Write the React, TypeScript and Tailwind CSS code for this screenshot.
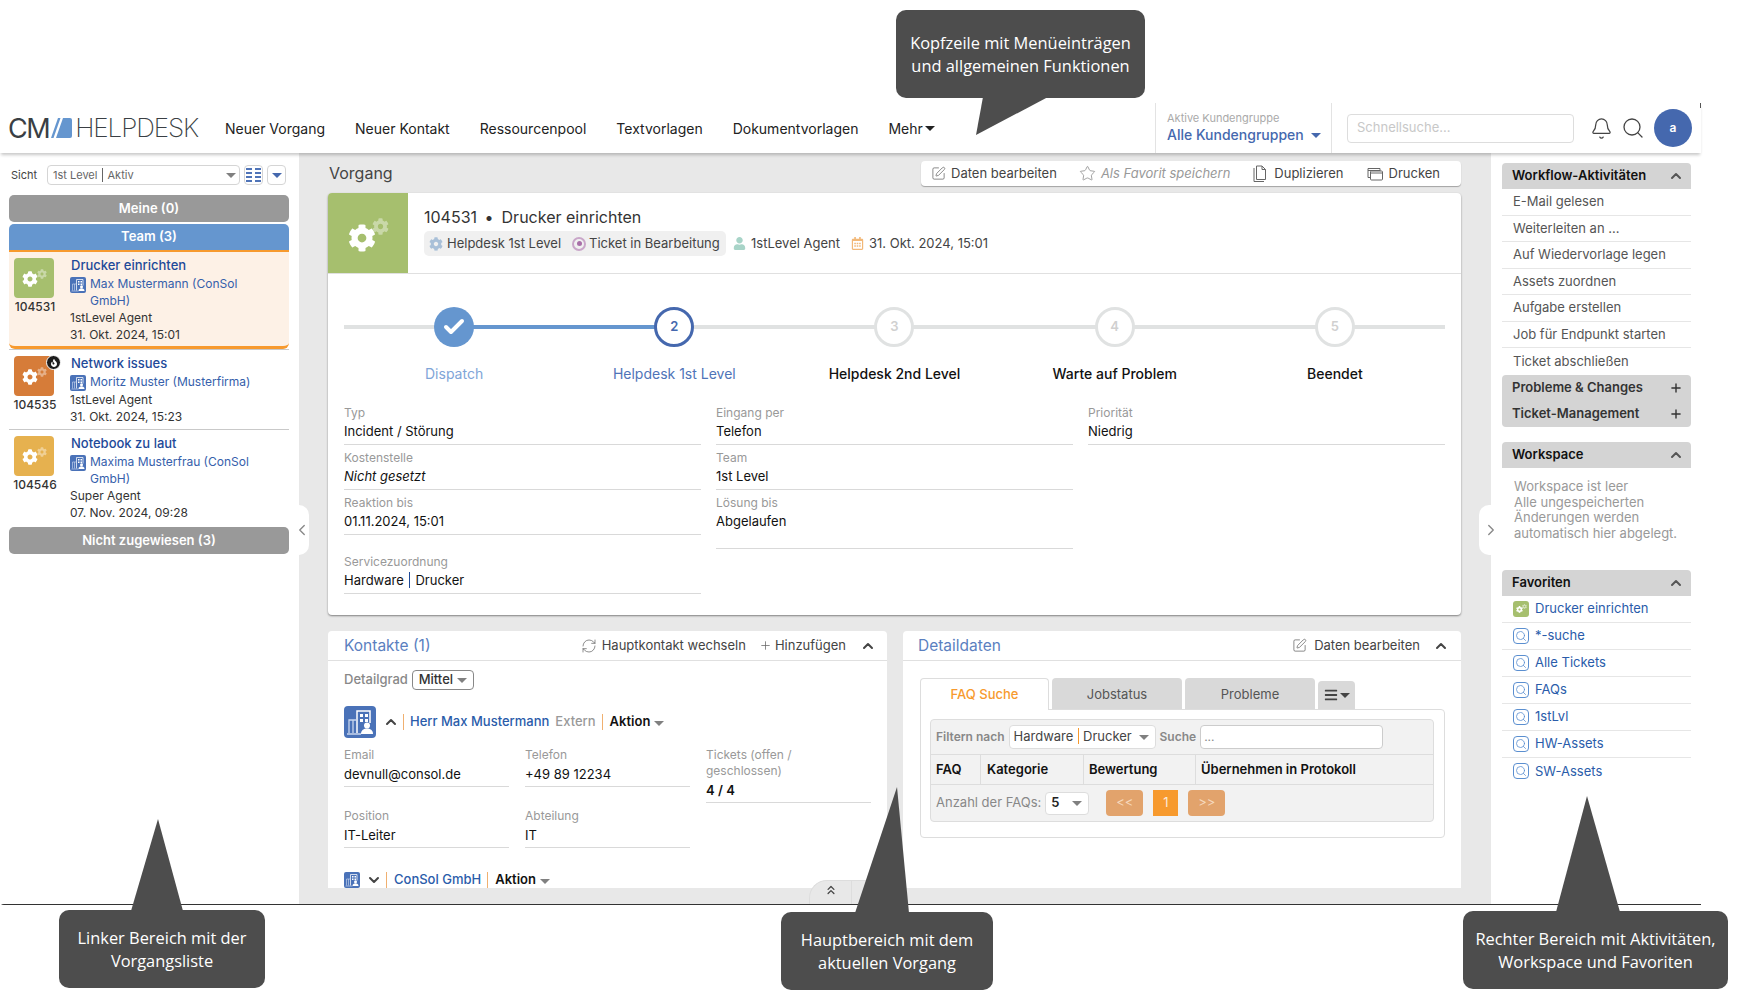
import React from "react";
import {
  Bell,
  ChevronLeft,
  ChevronRight,
  ChevronUp,
  ChevronDown,
  ChevronsUp,
  Plus,
  Search,
  SquarePen,
  Star,
  Check,
  RefreshCw,
} from "lucide-react";
import { FaCog, FaUser, FaRegCalendarAlt, FaBars, FaFire } from "react-icons/fa";

function Caret({ className = "border-t-[#808080]" }: { className?: string }) {
  return (
    <span
      className={`inline-block h-0 w-0 border-x-[5px] border-t-[5px] border-x-transparent ${className}`}
    />
  );
}

function StatusIcon({ bg }: { bg: string }) {
  return (
    <div className={`relative h-10 w-10 rounded-[4px] ${bg}`}>
      <FaCog className="absolute left-[8px] top-[13px] text-[16px] text-white" />
      <FaCog className="absolute left-[23px] top-[11px] text-[10px] text-white opacity-40" />
    </div>
  );
}

function BuildingIcon({ className = "h-4 w-4" }: { className?: string }) {
  return (
    <svg viewBox="0 0 32 32" className={className}>
      <rect width="32" height="32" rx="4" fill="#4a72b8" />
      <path d="M5 27V14h7" stroke="#c8d6ee" strokeWidth="1.3" fill="none" />
      <path d="M9 14v13" stroke="#c8d6ee" strokeWidth="1.3" fill="none" />
      <path d="M13 27V5h13v12" stroke="#fff" strokeWidth="1.5" fill="none" />
      <path d="M16 8h3v3h-3zM21 8h3v3h-3zM16 13h3v3h-3zM21 13h3v3h-3z" fill="#fff" />
      <circle cx="23" cy="19.5" r="3" fill="#fff" />
      <path d="M17 28c0-4 3-5.5 6-5.5s6 1.500 6 5.500z" fill="#fff" />
      <path d="M3 28h14" stroke="#c8d6ee" strokeWidth="1.3" />
    </svg>
  );
}

function WindowsIcon() {
  return (
    <svg viewBox="0 0 16 14" className="h-[14px] w-[16px]" fill="none" stroke="#666" strokeWidth="1">
      <path d="M3.5 10.5H1V1.500h12v2.500" />
      <path d="M1 3.500h12" />
      <rect x="3.500" y="4" width="12" height="9" rx="1" />
      <path d="M3.500 6h12" />
    </svg>
  );
}

function FilesIcon() {
  return (
    <svg viewBox="0 0 14 18" className="h-[18px] w-[14px]" fill="none" stroke="#666" strokeWidth="1">
      <path d="M1 3v13.500h10" />
      <path d="M3.500 1h5.500l3.500 3.500V14.500h-9z" />
      <path d="M9 1v3.500h3.500" />
    </svg>
  );
}

function FavSearch() {
  return (
    <span className="flex h-[16px] w-[16px] items-center justify-center rounded-[4px] border border-[#5b8fd0]">
      <Search size={12} strokeWidth={1.6} className="text-[#5b8fd0]" />
    </span>
  );
}

type Ticket = {
  id: string;
  title: string;
  contact: string;
  agent: string;
  date: string;
  bg: string;
  badge?: boolean;
  box: string;
};

function TicketRow({ t }: { t: Ticket }) {
  return (
    <div className={`flex pt-[5px] ${t.box}`}>
      <div className="flex w-[61px] shrink-0 flex-col pl-[5px] pt-[1px]">
        <div className="relative w-10">
          <StatusIcon bg={t.bg} />
          {t.badge && (
            <span className="absolute -right-[7px] -top-[1px] flex h-[15px] w-[15px] items-center justify-center rounded-full border border-white bg-[#1c1c1c]">
              <FaFire className="text-[8px] text-white" />
            </span>
          )}
        </div>
        <span className="-ml-[1px] w-[44px] text-center text-[12px] font-medium leading-[18px] text-[#333]">
          {t.id}
        </span>
      </div>
      <div className="min-w-0 flex-1 pr-4 text-[12px] leading-[17px] text-[#333]">
        <div className="pl-[1px] text-[13px] font-medium leading-[16px] text-[#1e4a99]">{t.title}</div>
        <div className="mt-[2px] flex gap-[4px]">
          <BuildingIcon className="mt-[2px] h-[16px] w-[16px] shrink-0" />
          <span className="text-[#3660ab]">{t.contact}</span>
        </div>
        <div className="leading-[18px]">{t.agent}</div>
        <div className="leading-[16px]">{t.date}</div>
      </div>
    </div>
  );
}

function Field({
  label,
  value,
  className = "h-10",
}: {
  label: string;
  value: React.ReactNode;
  className?: string;
}) {
  return (
    <div className={`mb-[5px] border-b border-[#d9d9d9] ${className}`}>
      <div className="text-[12px] leading-[16px] text-[#999]">{label}</div>
      <div className="text-[13px] leading-[20px] text-[#111]">{value}</div>
    </div>
  );
}

function PanelHead({
  title,
  plus,
  rounded = "rounded-t-[4px]",
  strong = true,
}: {
  title: string;
  plus?: boolean;
  rounded?: string;
  strong?: boolean;
}) {
  return (
    <div className={`flex h-[26px] items-center justify-between bg-[#d4d4d4] pl-[10px] pr-[7px] ${rounded}`}>
      <span className={`text-[13px] font-semibold ${strong ? "text-[#111]" : "text-[#333]"}`}>{title}</span>
      {plus ? (
        <Plus size={14} strokeWidth={2.4} className="mr-[1px] text-[#333]" />
      ) : (
        <ChevronUp size={16} strokeWidth={3} className="text-[#555]" />
      )}
    </div>
  );
}

function Step({
  n,
  label,
  state,
}: {
  n: number;
  label: string;
  state: "done" | "current" | "todo";
}) {
  return (
    <div className="relative z-10 flex flex-col items-center">
      {state === "done" && (
        <span className="flex h-10 w-10 items-center justify-center rounded-full bg-[#6596cf]">
          <Check size={24} strokeWidth={4} className="text-white" />
        </span>
      )}
      {state === "current" && (
        <span className="flex h-10 w-10 items-center justify-center rounded-full border-[3.5px] border-[#4568ae] bg-white text-[13px] font-semibold text-[#4568ae]">
          {n}
        </span>
      )}
      {state === "todo" && (
        <span className="flex h-10 w-10 items-center justify-center rounded-full border-[3.5px] border-[#e0e2e2] bg-white text-[13px] font-semibold text-[#d0d0d0]">
          {n}
        </span>
      )}
      <span
        className={`mt-[19px] text-[14px] leading-[16px] ${
          state === "done"
            ? "text-[#7fa5d8]"
            : state === "current"
              ? "text-[#4f74b8]"
              : "font-medium text-[#111]"
        }`}
      >
        {label}
      </span>
    </div>
  );
}

function Callout({ box, lines }: { box: string; lines: string[] }) {
  return (
    <div
      className={`absolute z-30 flex flex-col items-center justify-center rounded-[10px] bg-[#4d4d4d] font-['Open_Sans',sans-serif] text-[16.4px] leading-[23px] text-white ${box}`}
    >
      {lines.map((l) => (
        <span key={l}>{l}</span>
      ))}
    </div>
  );
}

const tickets: Ticket[] = [
  {
    id: "104531",
    title: "Drucker einrichten",
    contact: "Max Mustermann (ConSol GmbH)",
    agent: "1stLevel Agent",
    date: "31. Okt. 2024, 15:01",
    bg: "bg-[#a6bf6e]",
    box: "h-[97px] rounded-b-[6px] border-b-[3px] border-[#f79a2e] bg-[#fdf1e6]",
  },
  {
    id: "104535",
    title: "Network issues",
    contact: "Moritz Muster (Musterfirma)",
    agent: "1stLevel Agent",
    date: "31. Okt. 2024, 15:23",
    bg: "bg-[#d67c39]",
    badge: true,
    box: "h-[80px] border-b border-[#c9c9c9]",
  },
  {
    id: "104546",
    title: "Notebook zu laut",
    contact: "Maxima Musterfrau (ConSol GmbH)",
    agent: "Super Agent",
    date: "07. Nov. 2024, 09:28",
    bg: "bg-[#e6b14f]",
    box: "h-[97px]",
  },
];

const workflow = [
  "E-Mail gelesen",
  "Weiterleiten an ...",
  "Auf Wiedervorlage legen",
  "Assets zuordnen",
  "Aufgabe erstellen",
  "Job für Endpunkt starten",
  "Ticket abschließen",
];

const favorites = ["*-suche", "Alle Tickets", "FAQs", "1stLvl", "HW-Assets", "SW-Assets"];

export default function App() {
  return (
    <div className="relative h-[1000px] w-[1738px] overflow-hidden bg-white pt-[103px] font-['Inter',sans-serif]">
      <div className="flex h-[802px] w-[1701px] flex-col rounded-bl-[4px] border-b border-[#333]">
        {/* Header */}
        <header className="relative z-20 flex h-[50px] shrink-0 items-center bg-white shadow-[0_3px_3px_-1px_rgba(0,0,0,0.22)]">
          <div className="flex w-[225px] shrink-0 items-center pl-[8px] leading-none text-[#3a3f44]">
            <span className="text-[27px] font-normal tracking-[-1.5px]">CM</span>
            <svg viewBox="0 0 21 20" className="ml-[2px] h-[20px] w-[21px]" fill="#6596cf">
              <path d="M0 20 7 0h2.500l-7 20z" />
              <path d="M5 20 12 0h7a2 2 0 0 1 2 2v16a2 2 0 0 1-2 2z" />
            </svg>
            <span className="ml-[3px] text-[26px] font-extralight tracking-[-1.05px]">HELPDESK</span>
          </div>
          <nav className="flex items-center gap-[30px] text-[14px] text-[#222]">
            <span>Neuer Vorgang</span>
            <span>Neuer Kontakt</span>
            <span>Ressourcenpool</span>
            <span>Textvorlagen</span>
            <span>Dokumentvorlagen</span>
            <span className="flex items-center gap-[2px]">
              Mehr <Caret className="border-t-[#222]" />
            </span>
          </nav>
          <div className="ml-auto flex h-full items-center pr-[9px]">
            <div className="flex h-full w-[177px] flex-col justify-center border-x border-[#e3e3e3] pl-[11px]">
              <span className="text-[11px] leading-[14px] text-[#aaa]">Aktive Kundengruppe</span>
              <span className="flex items-center gap-[7px] text-[14px] font-medium leading-[20px] text-[#4568ae]">
                Alle Kundengruppen <Caret className="border-t-[#4568ae]" />
              </span>
            </div>
            <div className="ml-[15px] flex h-[29px] w-[227px] items-center rounded-[4px] border border-[#ddd] pl-[9px] text-[13px] text-[#c8c8c8]">
              Schnellsuche...
            </div>
            <Bell size={23} strokeWidth={1.3} className="ml-[16px] text-[#444]" />
            <Search size={24} strokeWidth={1.3} className="ml-[8px] text-[#444]" />
            <span className="ml-[9px] flex h-[38px] w-[38px] items-center justify-center rounded-full bg-[#4568ae] text-[12px] font-semibold text-white">
              a
            </span>
          </div>
          <span className="absolute right-0 top-0 h-[5px] w-px bg-[#555]" />
        </header>

        <div className="flex min-h-0 flex-1">
          {/* Left */}
          <aside className="relative w-[299px] shrink-0 bg-white pl-[9px] pr-[10px] pt-[12px]">
            <div className="flex h-5 items-center text-[11px] text-[#444]">
              <span className="ml-[2px] w-[36px]">Sicht</span>
              <div className="flex h-5 w-[193px] items-center justify-between rounded-[4px] border border-[#d5d5d5] pl-[5px] pr-[3px] text-[#666]">
                <span>
                  1st Level <span className="ml-[1px] border-l border-[#666] pl-[5px]">Aktiv</span>
                </span>
                <Caret />
              </div>
              <span className="ml-[4px] flex h-5 w-[19px] items-center justify-center rounded-[4px] border border-[#d5d5d5]">
                <svg viewBox="0 0 15 14" className="h-[14px] w-[15px]" fill="#4f74b8">
                  <path d="M0 0h6v2H0zM9 0h6v2H9zM0 4h6v2H0zM9 4h6v2H9zM0 8h6v2H0zM9 8h6v2H9zM0 12h6v2H0zM9 12h6v2H9z" />
                </svg>
              </span>
              <span className="ml-[4px] flex h-5 w-[19px] items-center justify-center rounded-[4px] border border-[#d5d5d5]">
                <Caret className="border-t-[#4568ae]" />
              </span>
            </div>
            <div className="mt-[10px] flex h-[27px] items-center justify-center rounded-[5px] bg-[#999] text-[13px] font-semibold text-white">
              Meine (0)
            </div>
            <div className="mt-[2px] flex h-[28px] items-center justify-center rounded-t-[5px] border-b-2 border-[#f79a2e] bg-[#6596cf] text-[13px] font-semibold text-white">
              Team (3)
            </div>
            <TicketRow t={tickets[0]} />
            <div className="h-px bg-[#c9c9c9]" />
            <TicketRow t={tickets[1]} />
            <TicketRow t={tickets[2]} />
            <div className="flex h-[27px] items-center justify-center rounded-[5px] bg-[#999] text-[13px] font-semibold text-white">
              Nicht zugewiesen (3)
            </div>
          </aside>

          {/* Main */}
          <main className="relative min-w-0 flex-1 bg-[#e8e8e8] pl-[29px] pr-[30px]">
            <div className="flex h-[33px] items-end justify-between">
              <span className="mb-[1px] pl-[1px] text-[16px] leading-[24px] text-[#444]">Vorgang</span>
              <div className="flex h-[25px] w-[540px] items-center rounded-[4px] bg-white pl-[10px] text-[13px] text-[#444] shadow-[0_1px_1px_rgba(0,0,0,0.3)]">
                <span className="flex items-center gap-[5px]">
                  <SquarePen size={15} strokeWidth={1.2} className="text-[#666]" /> Daten bearbeiten
                </span>
                <span className="ml-[22px] flex items-center gap-[5px] italic text-[#999]">
                  <Star size={17} strokeWidth={1.1} className="text-[#888]" /> Als Favorit speichern
                </span>
                <span className="ml-[23px] flex items-center gap-[7px]">
                  <FilesIcon /> Duplizieren
                </span>
                <span className="ml-[23px] flex items-center gap-[6px]">
                  <WindowsIcon /> Drucken
                </span>
              </div>
            </div>

            {/* Ticket card */}
            <section className="mt-[7px] h-[422px] rounded-[4px] bg-white shadow-[0_1px_2px_rgba(0,0,0,0.45)]">
              <div className="flex h-[81px] border-b border-[#e0e0e0]">
                <div className="relative h-20 w-20 shrink-0 rounded-tl-[4px] bg-[#a6bf6e]">
                  <FaCog className="absolute left-[20px] top-[31px] text-[28px] text-white" />
                  <FaCog className="absolute left-[44px] top-[25px] text-[17px] text-white opacity-40" />
                </div>
                <div className="pl-[16px] pt-[14px]">
                  <div className="text-[16px] leading-[20px] text-[#333]">
                    104531 <span className="mx-[3px]">•</span>
                    <span className="ml-[5px]">Drucker einrichten</span>
                  </div>
                  <div className="mt-[4px] flex items-center text-[13px] text-[#444]">
                    <span className="flex h-[25px] w-[302px] items-center rounded-[5px] bg-[#f0f0f0] pl-[5px]">
                      <FaCog className="mr-[4px] text-[14px] text-[#a9c0d8]" />
                      Helpdesk 1st Level
                      <span className="ml-[11px] mr-[3px] flex h-[14px] w-[14px] items-center justify-center rounded-full border-2 border-[#c9a6c9]">
                        <span className="h-[5px] w-[5px] rounded-full bg-[#a86fa8]" />
                      </span>
                      Ticket in Bearbeitung
                    </span>
                    <FaUser className="ml-[7px] mr-[5px] text-[13px] text-[#a8d4c8]" />
                    1stLevel Agent
                    <FaRegCalendarAlt className="ml-[11px] mr-[5px] text-[13px] text-[#f2b878]" />
                    31. Okt. 2024, 15:01
                  </div>
                </div>
              </div>

              {/* Stepper */}
              <div className="relative mx-[16px] grid grid-cols-5 pt-[33px]">
                <div className="absolute inset-x-0 top-[51px] h-[4px] bg-[#e0e2e2]" />
                <div className="absolute left-[110px] top-[51px] h-[4px] w-[220px] bg-[#6596cf]" />
                <Step n={1} label="Dispatch" state="done" />
                <Step n={2} label="Helpdesk 1st Level" state="current" />
                <Step n={3} label="Helpdesk 2nd Level" state="todo" />
                <Step n={4} label="Warte auf Problem" state="todo" />
                <Step n={5} label="Beendet" state="todo" />
              </div>

              {/* Fields */}
              <div className="mx-[16px] mt-[23px] grid grid-cols-3 gap-x-[15px]">
                <div>
                  <Field label="Typ" value="Incident / Störung" />
                  <Field label="Kostenstelle" value={<span className="italic">Nicht gesetzt</span>} />
                  <Field label="Reaktion bis" value="01.11.2024, 15:01" />
                  <div className="h-[14px]" />
                  <Field
                    label="Servicezuordnung"
                    value={
                      <span>
                        Hardware <span className="ml-[2px] border-l border-[#1e4a99] pl-[5px]">Drucker</span>
                      </span>
                    }
                  />
                </div>
                <div>
                  <Field label="Eingang per" value="Telefon" />
                  <Field label="Team" value="1st Level" />
                  <Field label="Lösung bis" value="Abgelaufen" className="h-[54px]" />
                </div>
                <div>
                  <Field label="Priorität" value="Niedrig" />
                </div>
              </div>
            </section>

            {/* Lower cards */}
            <div className="mt-[16px] grid h-[257px] grid-cols-[559px_558px] gap-x-[16px]">
              <section className="overflow-hidden rounded-t-[4px] bg-white">
                <div className="flex h-[30px] items-center border-b border-[#e0e0e0] pl-[16px] pr-[11px]">
                  <span className="text-[15.5px] text-[#5b7fbf]">Kontakte (1)</span>
                  <span className="ml-auto flex items-center gap-[5px] text-[13px] text-[#444]">
                    <RefreshCw size={16} strokeWidth={1.1} className="text-[#666]" /> Hauptkontakt wechseln
                  </span>
                  <span className="ml-[13px] flex items-center gap-[3px] text-[13px] text-[#444]">
                    <Plus size={13} strokeWidth={1.4} className="text-[#666]" /> Hinzufügen
                  </span>
                  <ChevronUp size={16} strokeWidth={3} className="ml-[14px] text-[#444]" />
                </div>
                <div className="pl-[16px] pr-[16px]">
                  <div className="mt-[9px] flex h-5 items-center text-[13px]">
                    <span className="font-medium text-[#888]">Detailgrad</span>
                    <span className="ml-[4px] flex h-5 w-[62px] items-center justify-center gap-[4px] rounded-[4px] border border-[#888] font-medium text-[#333]">
                      Mittel <Caret />
                    </span>
                  </div>
                  <div className="mt-[16px] flex h-[32px] items-center text-[13px]">
                    <BuildingIcon className="h-[32px] w-[32px]" />
                    <ChevronUp size={16} strokeWidth={3} className="ml-[7px] text-[#444]" />
                    <span className="ml-[4px] h-[16px] border-l border-[#f0b070]" />
                    <span className="ml-[6px] font-medium text-[#2a5caa]">Herr Max Mustermann</span>
                    <span className="ml-[6px] font-medium text-[#999]">Extern</span>
                    <span className="ml-[6px] h-[16px] border-l border-[#f0b070]" />
                    <span className="ml-[7px] font-semibold text-[#111]">Aktion</span>
                    <span className="ml-[4px]">
                      <Caret />
                    </span>
                  </div>
                  <div className="mt-[9px] grid grid-cols-3 gap-x-[16px]">
                    <div className="h-[40px] border-b border-[#d9d9d9]">
                      <div className="text-[12px] leading-[16px] text-[#999]">Email</div>
                      <div className="mt-[1px] text-[13px] leading-[20px] text-[#111]">devnull@consol.de</div>
                    </div>
                    <div className="h-[40px] border-b border-[#d9d9d9]">
                      <div className="text-[12px] leading-[16px] text-[#999]">Telefon</div>
                      <div className="mt-[1px] text-[13px] leading-[20px] text-[#111]">+49 89 12234</div>
                    </div>
                    <div className="h-[56px] border-b border-[#d9d9d9]">
                      <div className="text-[12px] leading-[16px] text-[#999]">
                        Tickets (offen /
                        <br />
                        geschlossen)
                      </div>
                      <div className="mt-[1px] text-[13px] font-semibold leading-[20px] text-[#111]">4 / 4</div>
                    </div>
                    <div className="mt-[5px] h-[40px] border-b border-[#d9d9d9]">
                      <div className="text-[12px] leading-[16px] text-[#999]">Position</div>
                      <div className="mt-[1px] text-[13px] leading-[20px] text-[#111]">IT-Leiter</div>
                    </div>
                    <div className="mt-[5px] h-[40px] border-b border-[#d9d9d9]">
                      <div className="text-[12px] leading-[16px] text-[#999]">Abteilung</div>
                      <div className="mt-[1px] text-[13px] leading-[20px] text-[#111]">IT</div>
                    </div>
                  </div>
                  <div className="mt-[24px] flex h-[16px] items-center text-[13px]">
                    <BuildingIcon className="h-[16px] w-[16px]" />
                    <ChevronDown size={16} strokeWidth={3} className="ml-[6px] text-[#444]" />
                    <span className="ml-[4px] h-[16px] border-l border-[#f0b070]" />
                    <span className="ml-[7px] font-medium text-[#2a5caa]">ConSol GmbH</span>
                    <span className="ml-[6px] h-[16px] border-l border-[#f0b070]" />
                    <span className="ml-[7px] font-semibold text-[#111]">Aktion</span>
                    <span className="ml-[4px]">
                      <Caret />
                    </span>
                  </div>
                </div>
              </section>

              <section className="overflow-hidden rounded-t-[4px] bg-white">
                <div className="flex h-[30px] items-center border-b border-[#e0e0e0] pl-[15px] pr-[12px]">
                  <span className="text-[15.5px] text-[#5b7fbf]">Detaildaten</span>
                  <span className="ml-auto flex items-center gap-[7px] text-[13px] text-[#444]">
                    <SquarePen size={15} strokeWidth={1.2} className="text-[#666]" /> Daten bearbeiten
                  </span>
                  <ChevronUp size={16} strokeWidth={3} className="ml-[13px] text-[#444]" />
                </div>
                <div className="pl-[17px] pr-[16px] pt-[17px]">
                  <div className="relative z-10 flex h-[31px] items-end gap-[3px] text-[13px]">
                    <span className="-mb-px flex h-[32px] w-[129px] items-center justify-center rounded-t-[4px] border border-b-0 border-[#ddd] bg-white pt-[1px] font-medium text-[#f79a2e]">
                      FAQ Suche
                    </span>
                    <span className="flex h-[31px] w-[130px] items-center justify-center rounded-t-[4px] bg-[#d9d9d9] pt-[2px] text-[#555]">
                      Jobstatus
                    </span>
                    <span className="flex h-[31px] w-[130px] items-center justify-center rounded-t-[4px] bg-[#d9d9d9] pt-[2px] text-[#555]">
                      Probleme
                    </span>
                    <span className="flex h-[28px] w-[37px] items-center justify-center gap-[2px] rounded-t-[4px] bg-[#d9d9d9]">
                      <FaBars className="text-[14px] text-[#444]" />
                      <Caret className="border-t-[#444]" />
                    </span>
                  </div>
                  <div className="h-[129px] rounded-b-[4px] rounded-tr-[4px] border border-[#ddd] pb-[10px] pl-[9px] pr-[10px] pt-[9px]">
                    <div className="h-[103px] rounded-[4px] border border-[#ddd] bg-[#f2f2f2] text-[12px]">
                      <div className="flex h-[35px] items-center border-b border-[#ddd] pl-[5px]">
                        <span className="font-semibold text-[#888]">Filtern nach</span>
                        <span className="ml-[4px] flex h-[24px] w-[147px] items-center justify-between rounded-[4px] border border-[#ddd] bg-white pl-[4px] pr-[6px] text-[13px] text-[#444]">
                          <span>
                            Hardware <span className="ml-[1px] border-l border-[#f79a2e] pl-[4px]">Drucker</span>
                          </span>
                          <Caret />
                        </span>
                        <span className="ml-[4px] font-semibold text-[#888]">Suche</span>
                        <span className="ml-[4px] flex h-[24px] w-[183px] items-center rounded-[4px] border border-[#ccc] bg-white pl-[3px] text-[#888]">
                          ...
                        </span>
                      </div>
                      <div className="grid h-[30px] grid-cols-[50px_103px_112px_1fr] border-b border-[#ddd] text-[13px] font-semibold text-[#111]">
                        <span className="flex items-center border-r border-[#ddd] pl-[5px]">FAQ</span>
                        <span className="flex items-center border-r border-[#ddd] pl-[6px]">Kategorie</span>
                        <span className="flex items-center border-r border-[#ddd] pl-[5px]">Bewertung</span>
                        <span className="flex items-center pl-[5px]">Übernehmen in Protokoll</span>
                      </div>
                      <div className="flex h-[36px] items-center pl-[5px] text-[13px]">
                        <span className="text-[#888]">Anzahl der FAQs:</span>
                        <span className="ml-[4px] flex h-[23px] w-[44px] items-center justify-between rounded-[4px] border border-[#ddd] bg-white pl-[5px] pr-[6px] font-semibold text-[#222]">
                          5 <Caret />
                        </span>
                        <span className="ml-[17px] flex h-[26px] w-[37px] items-center justify-center rounded-[4px] bg-[#e2a36c] text-[#f6d9bd]">
                          &lt;&lt;
                        </span>
                        <span className="ml-[10px] flex h-[26px] w-[25px] items-center justify-center bg-[#f79a2e] text-[#fbeadb]">
                          1
                        </span>
                        <span className="ml-[10px] flex h-[26px] w-[37px] items-center justify-center rounded-[4px] bg-[#e2a36c] text-[#f6d9bd]">
                          &gt;&gt;
                        </span>
                      </div>
                    </div>
                  </div>
                </div>
              </section>
            </div>

            {/* Overlay handles */}
            <div className="absolute bottom-0 left-[510px] flex h-[24px] w-[70px] rounded-tl-[18px] border-l border-t border-[#ddd] bg-[#e8e8e8]">
              <span className="flex w-[42px] items-center justify-center border-r border-[#ddd] pb-[6px]">
                <ChevronsUp size={14} strokeWidth={2.2} className="text-[#444]" />
              </span>
            </div>
            <div className="absolute left-0 top-[352px] flex h-[50px] w-[10px] items-center rounded-r-[10px] bg-white">
              <ChevronLeft size={18} strokeWidth={1.8} className="-ml-[6px] shrink-0 text-[#888]" />
            </div>
            <div className="absolute right-0 top-[352px] flex h-[50px] w-[12px] items-center rounded-l-[10px] bg-white">
              <ChevronRight size={18} strokeWidth={1.8} className="ml-[3px] shrink-0 text-[#888]" />
            </div>
          </main>

          {/* Right */}
          <aside className="w-[210px] shrink-0 bg-white pl-[11px] pr-[10px] pt-[10px] text-[13px]">
            <PanelHead title="Workflow-Aktivitäten" />
            {workflow.map((w, i) => (
              <div
                key={w}
                className={`flex h-[26.57px] items-center pl-[11px] text-[#555] ${
                  i < workflow.length - 1 ? "border-b border-[#e6e6e6]" : ""
                }`}
              >
                {w}
              </div>
            ))}
            <PanelHead title="Probleme & Changes" plus strong={false} rounded="rounded-t-[4px]" />
            <PanelHead title="Ticket-Management" plus strong={false} rounded="rounded-b-[4px]" />

            <div className="mt-[15px]">
              <PanelHead title="Workspace" />
              <div className="pl-[12px] pt-[11px] leading-[15.7px] text-[#999]">
                Workspace ist leer
                <br />
                Alle ungespeicherten
                <br />
                Änderungen werden
                <br />
                automatisch hier abgelegt.
              </div>
            </div>

            <div className="mt-[28px]">
              <PanelHead title="Favoriten" />
              <div className="flex h-[27px] items-center gap-[6px] border-b border-[#e6e6e6] pl-[11px] text-[#2a5caa]">
                <span className="relative h-4 w-4 rounded-[3px] bg-[#a6bf6e]">
                  <FaCog className="absolute left-[3px] top-[5px] text-[7px] text-white" />
                  <FaCog className="absolute left-[9px] top-[3px] text-[5px] text-white opacity-50" />
                </span>
                Drucker einrichten
              </div>
              {favorites.map((f, i) => (
                <div
                  key={f}
                  className={`flex h-[27px] items-center gap-[6px] pl-[11px] text-[#2a5caa] ${
                    i < favorites.length - 1 ? "border-b border-[#e6e6e6]" : ""
                  }`}
                >
                  <FavSearch />
                  {f}
                </div>
              ))}
            </div>
          </aside>
        </div>
      </div>

      {/* Callouts */}
      <Callout box="left-[896px] top-[10px] h-[88px] w-[249px]" lines={["Kopfzeile mit Menüeinträgen", "und allgemeinen Funktionen"]} />
      <Callout box="left-[59px] top-[910px] h-[78px] w-[206px]" lines={["Linker Bereich mit der", "Vorgangsliste"]} />
      <Callout box="left-[781px] top-[912px] h-[78px] w-[212px]" lines={["Hauptbereich mit dem", "aktuellen Vorgang"]} />
      <Callout box="left-[1463px] top-[911px] h-[78px] w-[265px]" lines={["Rechter Bereich mit Aktivitäten,", "Workspace und Favoriten"]} />
      <svg className="pointer-events-none absolute left-0 top-0 z-30 h-[1000px] w-[1738px]" viewBox="0 0 1738 1000" fill="#4d4d4d">
        <polygon points="983,97 1048,97 976,135" />
        <polygon points="131,911 183,911 158,819" />
        <polygon points="855,913 909,913 897,787" />
        <polygon points="1556,912 1620,912 1587,796" />
      </svg>
    </div>
  );
}
